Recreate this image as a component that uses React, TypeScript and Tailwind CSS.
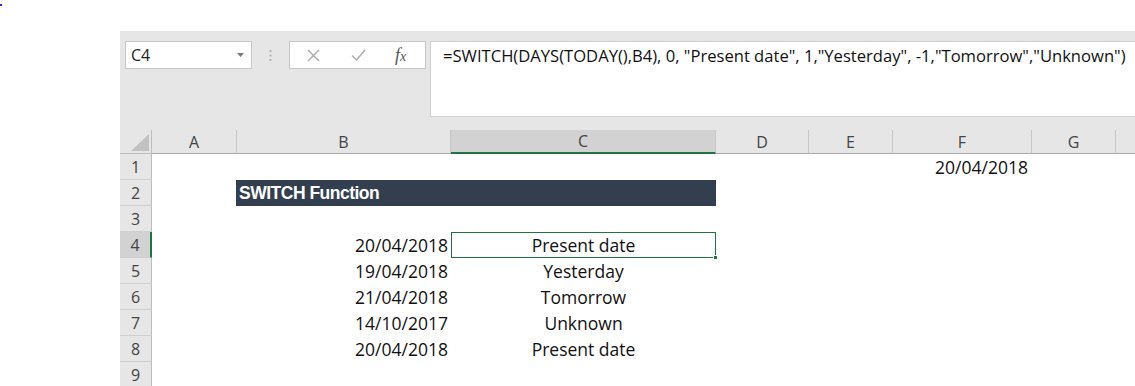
import React from "react";

const cols = [
  { key: "A", w: "w-[85px]" },
  { key: "B", w: "w-[214px]" },
  { key: "C", w: "w-[265px]" },
  { key: "D", w: "w-[93px]" },
  { key: "E", w: "w-[84px]" },
  { key: "F", w: "w-[139px]" },
  { key: "G", w: "w-[84px]" },
];

const data = [
  { b: "20/04/2018", c: "Present date" },
  { b: "19/04/2018", c: "Yesterday" },
  { b: "21/04/2018", c: "Tomorrow" },
  { b: "14/10/2017", c: "Unknown" },
  { b: "20/04/2018", c: "Present date" },
];

const cellFont = "font-['Open_Sans',sans-serif] text-[17.5px] text-[#111]";

function RowHead({ n, active }: { n: number; active?: boolean }) {
  return (
    <div
      className={`w-[32px] shrink-0 h-full flex items-center justify-center border-b border-[#cfcfcf] font-['Open_Sans',sans-serif] text-[16px] text-[#444] ${
        active
          ? "bg-[#d2d2d2] border-r-2 border-r-[#217346]"
          : "bg-[#e6e6e6] border-r border-r-[#bdbdbd]"
      }`}
    >
      {n}
    </div>
  );
}

export default function App() {
  return (
    <div className="w-[1135px] h-[386px] bg-white overflow-hidden relative">
      <div className="absolute left-0 top-[4px] w-[2px] h-[2px] bg-[#2b2bd6]" />

      <div className="pl-[120px] pt-[31px] flex flex-col">
        {/* formula bar */}
        <div className="h-[99px] bg-[#e6e6e6] flex items-start pt-[10px] pl-[5px]">
          <div className="w-[127px] h-[28px] bg-white border border-[#c8c8c8] flex items-center justify-between pl-[5px] pr-[7px]">
            <span className="font-['Open_Sans',sans-serif] text-[16px] text-[#222]">C4</span>
            <svg width="7" height="4" viewBox="0 0 7 4">
              <path d="M0 0 L7 0 L3.5 4 Z" fill="#777" />
            </svg>
          </div>
          <div className="w-[37px] h-[28px] flex items-center justify-center">
            <svg width="3" height="11" viewBox="0 0 3 11">
              <rect x="0.5" y="0" width="2" height="2" fill="#b5b5b5" />
              <rect x="0.5" y="4.5" width="2" height="2" fill="#b5b5b5" />
              <rect x="0.5" y="9" width="2" height="2" fill="#b5b5b5" />
            </svg>
          </div>
          <div className="w-[137px] h-[28px] bg-white border border-[#c8c8c8] flex items-center">
            <div className="w-[46px] flex justify-center">
              <svg width="13" height="13" viewBox="0 0 13 13">
                <path d="M1 1 L12 12 M12 1 L1 12" stroke="#a8a8a8" strokeWidth="1.3" />
              </svg>
            </div>
            <div className="w-[44px] flex justify-center">
              <svg width="15" height="12" viewBox="0 0 15 12">
                <path d="M1 6.5 L5.5 11 L14 1" stroke="#b0b0b0" strokeWidth="1.6" fill="none" />
              </svg>
            </div>
            <div className="flex-1 flex justify-center pr-[4px]">
              <span className="font-['Liberation_Serif',serif] italic text-[18px] text-[#555] leading-none">
                f<span className="text-[14px]">x</span>
              </span>
            </div>
          </div>
          <div className="ml-[4px] flex-1 h-[76px] bg-white border-y border-l border-[#d0d0d0] pl-[12px] pt-[2px]">
            <span className="font-['Open_Sans',sans-serif] text-[16.6px] text-[#111] whitespace-nowrap">
              =SWITCH(DAYS(TODAY(),B4), 0, "Present date", 1,"Yesterday", -1,"Tomorrow","Unknown")
            </span>
          </div>
        </div>

        {/* column headers */}
        <div className="h-[24px] flex bg-[#e6e6e6]">
          <div className="w-[32px] shrink-0 h-full border-r border-b border-[#bdbdbd] flex items-end justify-end pr-[2px] pb-[2px]">
            <svg width="18" height="17" viewBox="0 0 18 17">
              <path d="M18 0 L18 17 L0 17 Z" fill="#c2c2c2" />
            </svg>
          </div>
          {cols.map((c) => (
            <div
              key={c.key}
              className={`${c.w} shrink-0 h-full flex items-center justify-center font-['Open_Sans',sans-serif] text-[16px] text-[#444] border-r border-r-[#c6c6c6] ${
                c.key === "C"
                  ? "bg-[#d2d2d2] border-b-2 border-b-[#217346]"
                  : "border-b border-b-[#a9a9a9]"
              }`}
            >
              {c.key}
            </div>
          ))}
          <div className="flex-1 h-full border-b border-b-[#a9a9a9]" />
        </div>

        {/* row 1 */}
        <div className="h-[26px] flex">
          <RowHead n={1} />
          <div className="w-[85px] shrink-0" />
          <div className="w-[214px] shrink-0" />
          <div className="w-[265px] shrink-0" />
          <div className="w-[93px] shrink-0" />
          <div className="w-[84px] shrink-0" />
          <div className={`w-[139px] shrink-0 flex items-center justify-end pr-[4px] ${cellFont}`}>
            20/04/2018
          </div>
        </div>

        {/* row 2 */}
        <div className="h-[26px] flex">
          <RowHead n={2} />
          <div className="w-[84px] shrink-0" />
          <div className="w-[480px] shrink-0 bg-[#333f4f] flex items-center pl-[3px]">
            <span className="font-['Liberation_Sans',sans-serif] font-bold text-[17.5px] text-white tracking-[-0.5px]">
              SWITCH Function
            </span>
          </div>
        </div>

        {/* row 3 */}
        <div className="h-[26px] flex">
          <RowHead n={3} />
        </div>

        {data.map((r, i) => (
          <div key={i} className="h-[26px] flex">
            <RowHead n={i + 4} active={i === 0} />
            <div className="w-[85px] shrink-0" />
            <div className={`w-[214px] shrink-0 flex items-center justify-end pr-[3px] ${cellFont}`}>
              {r.b}
            </div>
            <div
              className={`w-[265px] shrink-0 flex items-center justify-center relative ${cellFont} ${
                i === 0 ? "border border-[#217346]" : ""
              }`}
            >
              {r.c}
              {i === 0 && (
                <div className="absolute right-[-3px] bottom-[-3px] w-[5px] h-[5px] bg-[#217346] border border-white" />
              )}
            </div>
          </div>
        ))}

        {/* row 9 */}
        <div className="h-[26px] flex">
          <RowHead n={9} />
        </div>
      </div>
    </div>
  );
}
